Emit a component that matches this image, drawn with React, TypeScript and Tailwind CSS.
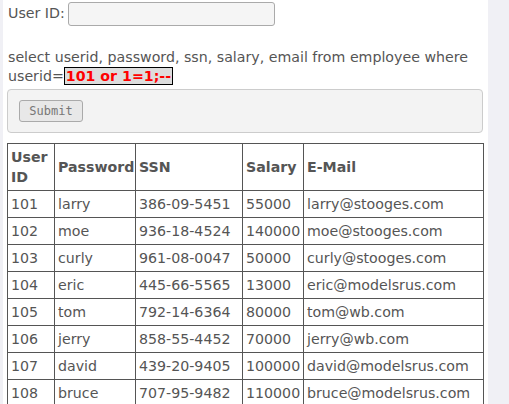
import React from "react";

const rows = [
  ["101", "larry", "386-09-5451", "55000", "larry@stooges.com"],
  ["102", "moe", "936-18-4524", "140000", "moe@stooges.com"],
  ["103", "curly", "961-08-0047", "50000", "curly@stooges.com"],
  ["104", "eric", "445-66-5565", "13000", "eric@modelsrus.com"],
  ["105", "tom", "792-14-6364", "80000", "tom@wb.com"],
  ["106", "jerry", "858-55-4452", "70000", "jerry@wb.com"],
  ["107", "david", "439-20-9405", "100000", "david@modelsrus.com"],
  ["108", "bruce", "707-95-9482", "110000", "bruce@modelsrus.com"],
];

export default function App() {
  return (
    <div className="flex h-[404px] overflow-hidden bg-[#f0f0f5] text-[14.2px] text-[#555]" style={{ fontFamily: '"DejaVu Sans", sans-serif' }}>
      <div className="ml-[3px] w-[485px] bg-white pl-[4px] pt-[2px]">
        <div className="flex items-center h-[24px]">
          <span className="ml-[1px] w-[60px] whitespace-nowrap">User ID:</span>
          <input className="ml-[0px] h-[24px] w-[207px] rounded-[3px] border border-[#aaa] bg-[#f5f5f5]" />
        </div>
        <div className="mt-[22px] ml-[1px] leading-[19px]">
          select userid, password, ssn, salary, email from employee where
          <br />
          userid=<span className="border border-black bg-[#ddd] px-[1px] font-bold text-[#f00]">101 or 1=1;--</span>
        </div>
        <div className="mt-[3px] h-[44px] w-[476px] rounded-[4px] border border-[#ccc] bg-[#f3f3f3] pl-[11px] pt-[10px]">
          <button className="h-[22px] w-[64px] rounded-[3px] border border-[#aaa] bg-[#e8e8e8] text-[12px] text-[#777]" style={{ fontFamily: '"DejaVu Sans Mono", monospace' }}>
            Submit
          </button>
        </div>
        <table className="mt-[10px] w-[476px] table-fixed border-collapse">
          <colgroup>
            <col className="w-[47px]" />
            <col className="w-[81px]" />
            <col className="w-[107px]" />
            <col className="w-[61px]" />
            <col className="w-[180px]" />
          </colgroup>
          <thead>
            <tr className="h-[47px]">
              {["User ID", "Password", "SSN", "Salary", "E-Mail"].map((h) => (
                <th key={h} className="border border-[#555] px-[3px] text-left font-bold leading-[20px]">
                  {h}
                </th>
              ))}
            </tr>
          </thead>
          <tbody>
            {rows.map((r) => (
              <tr key={r[0]} className="h-[27px]">
                {r.map((c, i) => (
                  <td key={i} className="border border-[#555] px-[3px] whitespace-nowrap leading-[20px]">
                    {c}
                  </td>
                ))}
              </tr>
            ))}
          </tbody>
        </table>
      </div>
    </div>
  );
}
